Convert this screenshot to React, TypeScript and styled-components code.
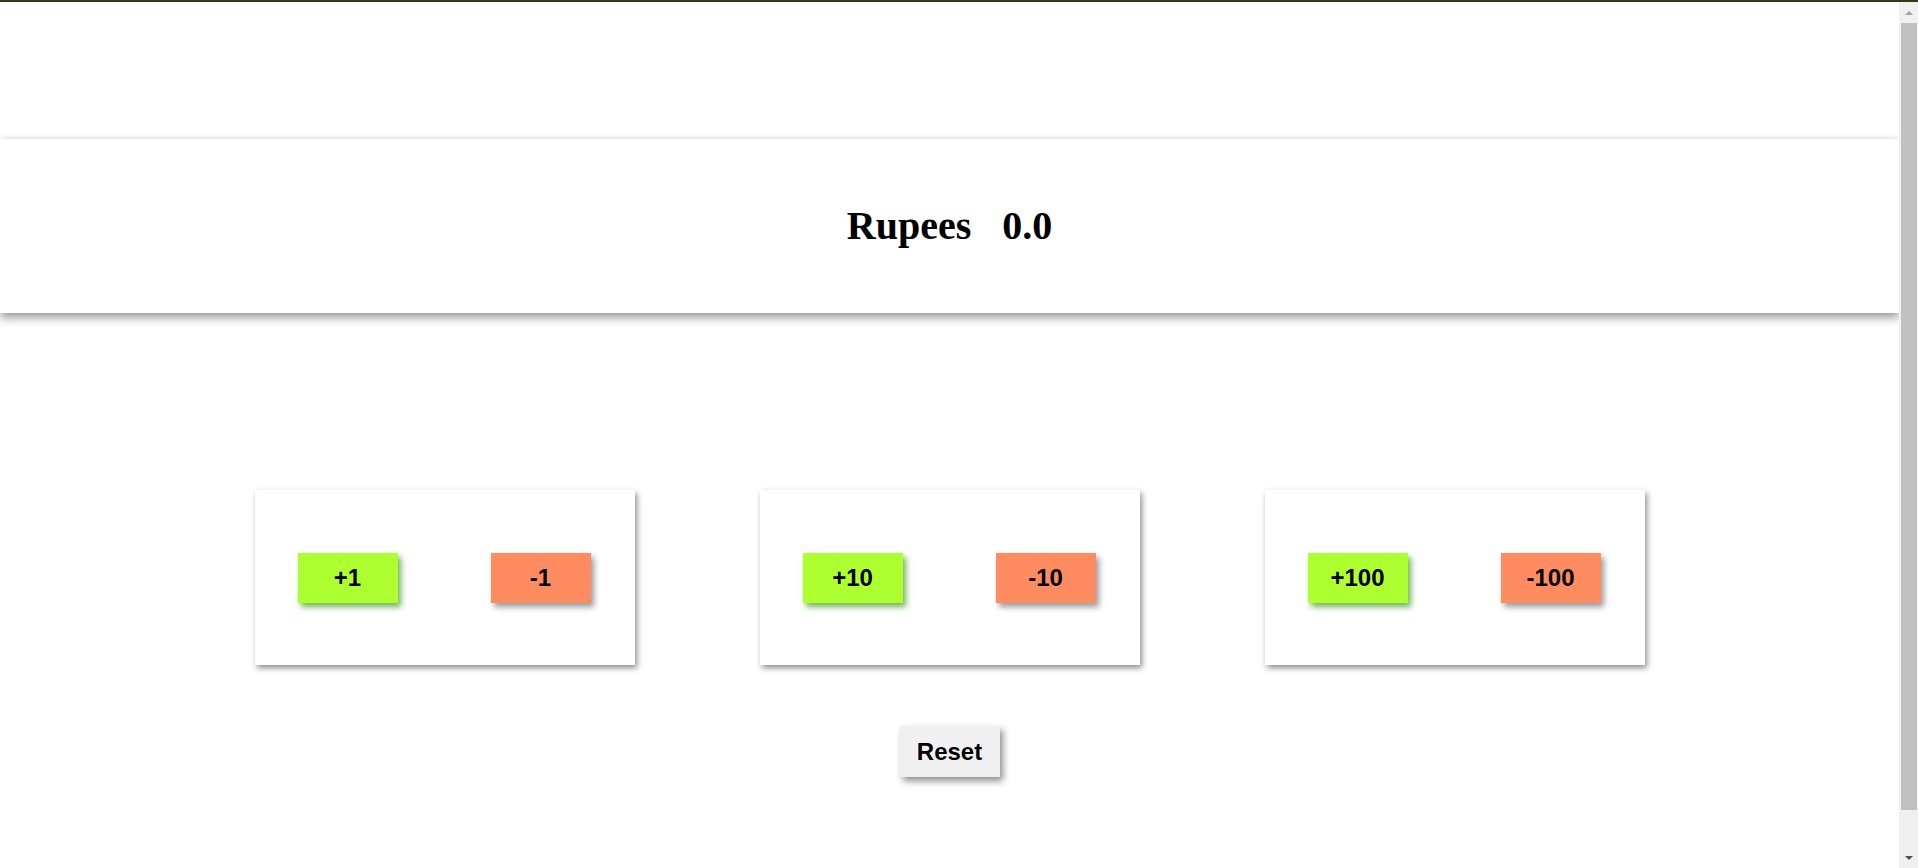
import React, { useState } from "react";
import styled, { createGlobalStyle } from "styled-components";

const Global = createGlobalStyle`
  html, body {
    margin: 0;
    padding: 0;
    background: #ffffff;
    overflow: hidden;
  }
  body {
    font-family: "Liberation Sans", Arial, sans-serif;
  }
`;

const TopLine = styled.div`
  height: 2px;
  background: #3b3517;
`;

const Shell = styled.div`
  display: flex;
  height: 866px;
`;

const Main = styled.main`
  flex: 1;
  min-width: 0;
  display: flex;
  flex-direction: column;
  align-items: center;
  padding-top: 137px;
  overflow: hidden;
`;

const ScrollTrack = styled.div`
  width: 19px;
  box-sizing: border-box;
  padding: 0 1px 0 2px;
  display: flex;
  flex-direction: column;
  background: #f0f0f0;
`;

const ArrowBox = styled.div`
  height: 21px;
  display: flex;
  align-items: center;
  justify-content: center;
`;

const Arrow = styled.span<{ $dir: "up" | "down" }>`
  width: 0;
  height: 0;
  border-left: 4px solid transparent;
  border-right: 4px solid transparent;
  ${(p) =>
    p.$dir === "up"
      ? "border-bottom: 4px solid #a3a3a3;"
      : "border-top: 4px solid #505050;"}
`;

const Thumb = styled.div`
  height: 787px;
  background: #c1c1c1;
`;

const TrackRest = styled.div`
  flex: 1;
`;

const Header = styled.header`
  align-self: stretch;
  height: 174px;
  flex: none;
  display: flex;
  align-items: center;
  justify-content: center;
  gap: 31px;
  background: #ffffff;
  box-shadow: 0 5px 9px rgba(0, 0, 0, 0.38), 0 -1px 6px rgba(0, 0, 0, 0.08);
`;

const HeaderText = styled.h1`
  margin: 0;
  font-family: "Liberation Serif", "Times New Roman", serif;
  font-weight: bold;
  font-size: 40px;
  color: #000;
  line-height: 1;
`;

const CardRow = styled.div`
  display: flex;
  gap: 125px;
  margin-top: 177px;
`;

const Card = styled.div`
  width: 380px;
  height: 175px;
  box-sizing: border-box;
  padding: 0 44px 0 43px;
  display: flex;
  align-items: center;
  justify-content: space-between;
  background: #fff;
  box-shadow: 2px 3px 6px rgba(0, 0, 0, 0.45);
`;

const ActionButton = styled.button<{ $kind: "add" | "sub" }>`
  width: 100px;
  height: 50px;
  border: none;
  padding: 0;
  font-family: "Liberation Sans", Arial, sans-serif;
  font-weight: bold;
  font-size: 24px;
  color: #000;
  cursor: pointer;
  background: ${(p) => (p.$kind === "add" ? "#adff2f" : "#ff8b61")};
  box-shadow: ${(p) =>
    p.$kind === "add"
      ? "3px 4px 6px rgba(40, 140, 0, 0.65)"
      : "3px 4px 6px rgba(0, 0, 0, 0.4)"};
`;

const ResetButton = styled.button`
  margin-top: 61px;
  width: 100px;
  height: 51px;
  flex: none;
  border: none;
  padding: 0;
  background: #f0f0f0;
  font-family: "Liberation Sans", Arial, sans-serif;
  font-weight: bold;
  font-size: 24px;
  color: #000;
  cursor: pointer;
  box-shadow: 3px 4px 7px rgba(0, 0, 0, 0.45);
`;

const steps = [1, 10, 100];

export default function App() {
  const [amount, setAmount] = useState(0);
  return (
    <>
      <Global />
      <TopLine />
      <Shell>
        <Main>
          <Header>
            <HeaderText>Rupees</HeaderText>
            <HeaderText>{amount.toFixed(1)}</HeaderText>
          </Header>
          <CardRow>
            {steps.map((s) => (
              <Card key={s}>
                <ActionButton $kind="add" onClick={() => setAmount((a) => a + s)}>
                  +{s}
                </ActionButton>
                <ActionButton $kind="sub" onClick={() => setAmount((a) => a - s)}>
                  -{s}
                </ActionButton>
              </Card>
            ))}
          </CardRow>
          <ResetButton onClick={() => setAmount(0)}>Reset</ResetButton>
        </Main>
        <ScrollTrack>
          <ArrowBox>
            <Arrow $dir="up" />
          </ArrowBox>
          <Thumb />
          <TrackRest />
          <ArrowBox>
            <Arrow $dir="down" />
          </ArrowBox>
        </ScrollTrack>
      </Shell>
    </>
  );
}
